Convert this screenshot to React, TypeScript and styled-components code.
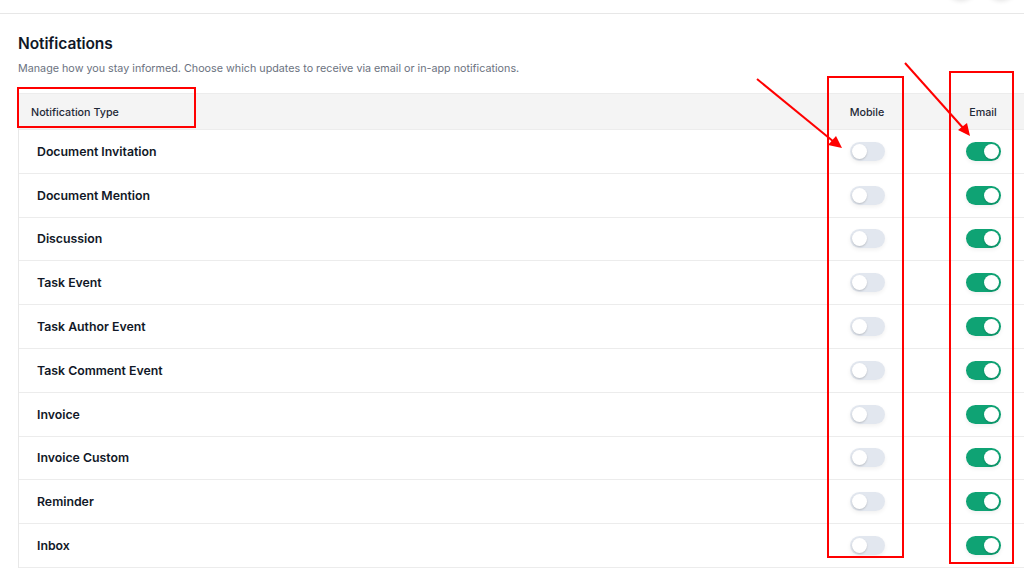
import React, { useState } from "react";
import styled, { createGlobalStyle } from "styled-components";

const Global = createGlobalStyle`
  html, body { margin: 0; padding: 0; background: #ffffff; overflow: hidden; }
  body { font-family: Inter, "Noto Sans", "Liberation Sans", sans-serif; color: #111827; }
  * { box-sizing: border-box; }
`;

const Page = styled.div`
  position: relative;
  width: 1024px;
  height: 569px;
  overflow: hidden;
`;

const TopBar = styled.div`
  height: 14px;
  border-bottom: 1px solid #e7e7e7;
  display: flex;
  justify-content: flex-end;
  align-items: flex-end;
  gap: 10px;
  padding-right: 8px;
  overflow: hidden;
`;

const CircleBtn = styled.div`
  width: 30px;
  height: 30px;
  border-radius: 50%;
  background: #fff;
  margin-bottom: 14px;
  box-shadow: 0 2px 5px rgba(0, 0, 0, 0.12);
`;

const Content = styled.div`
  padding: 20px 0 0 18px;
`;

const Title = styled.h2`
  margin: 0;
  font-size: 15.5px;
  font-weight: 600;
  line-height: 20px;
  color: #111827;
  letter-spacing: -0.1px;
`;

const Subtitle = styled.p`
  margin: 8px 0 0;
  font-size: 10.75px;
  line-height: 14px;
  color: #6b7280;
`;

const Table = styled.div`
  margin-top: 17px;
  width: 1023px;
  border-left: 1px solid #e8e8e8;
  border-top: 1px solid #ececec;
`;

const Row = styled.div<{ $head?: boolean }>`
  display: grid;
  grid-template-columns: 1fr 116px 116px;
  align-items: center;
  height: ${(p) => (p.$head ? "36px" : "43.8px")};
  background: ${(p) => (p.$head ? "#f4f4f4" : "#ffffff")};
  border-bottom: 1px solid #ececec;
`;

const HeadCell = styled.div<{ $center?: boolean }>`
  font-size: 10.75px;
  font-weight: 500;
  color: #1f2937;
  text-align: ${(p) => (p.$center ? "center" : "left")};
  padding-left: ${(p) => (p.$center ? "0" : "12px")};
  padding-top: 1px;
`;

const NameCell = styled.div`
  padding-left: 18px;
  font-size: 12.3px;
  font-weight: 600;
  color: #111827;
`;

const ToggleCell = styled.div`
  display: flex;
  justify-content: center;
`;

const Switch = styled.button<{ $on: boolean }>`
  position: relative;
  width: 35px;
  height: 19px;
  border-radius: 10px;
  border: none;
  padding: 0;
  cursor: pointer;
  background: ${(p) => (p.$on ? "#0fa374" : "#e2e7ef")};
  box-shadow: 0 2px 4px rgba(0, 0, 0, 0.06);
`;

const Knob = styled.span<{ $on: boolean }>`
  position: absolute;
  top: 2px;
  left: ${(p) => (p.$on ? "18px" : "2px")};
  width: 15px;
  height: 15px;
  border-radius: 50%;
  background: #ffffff;
  box-shadow: 0 1px 2px rgba(0, 0, 0, 0.18);
`;

const Overlay = styled.svg`
  position: absolute;
  left: 0;
  top: 0;
  width: 1024px;
  height: 569px;
  pointer-events: none;
`;

const rows = [
  "Document Invitation",
  "Document Mention",
  "Discussion",
  "Task Event",
  "Task Author Event",
  "Task Comment Event",
  "Invoice",
  "Invoice Custom",
  "Reminder",
  "Inbox",
];

function Toggle({ on, onClick }: { on: boolean; onClick: () => void }) {
  return (
    <Switch $on={on} onClick={onClick} aria-pressed={on}>
      <Knob $on={on} />
    </Switch>
  );
}

export default function App() {
  const [state, setState] = useState(
    rows.map(() => ({ mobile: false, email: true }))
  );
  const flip = (i: number, k: "mobile" | "email") =>
    setState((s) => s.map((r, j) => (j === i ? { ...r, [k]: !r[k] } : r)));

  return (
    <Page>
      <Global />
      <TopBar>
        <CircleBtn />
        <CircleBtn />
      </TopBar>
      <Content>
        <Title>Notifications</Title>
        <Subtitle>
          Manage how you stay informed. Choose which updates to receive via email or in-app notifications.
        </Subtitle>
        <Table>
          <Row $head>
            <HeadCell>Notification Type</HeadCell>
            <HeadCell $center>Mobile</HeadCell>
            <HeadCell $center>Email</HeadCell>
          </Row>
          {rows.map((name, i) => (
            <Row key={name}>
              <NameCell>{name}</NameCell>
              <ToggleCell>
                <Toggle on={state[i].mobile} onClick={() => flip(i, "mobile")} />
              </ToggleCell>
              <ToggleCell>
                <Toggle on={state[i].email} onClick={() => flip(i, "email")} />
              </ToggleCell>
            </Row>
          ))}
        </Table>
      </Content>
      <Overlay viewBox="0 0 1024 569">
        <g fill="none" stroke="#ff0000" strokeWidth="2">
          <rect x="18" y="88" width="177" height="39" />
          <rect x="828" y="77" width="75" height="480" />
          <rect x="950" y="72" width="63" height="491" />
          <line x1="757" y1="79" x2="834" y2="142" />
          <line x1="905" y1="63" x2="964" y2="129" />
        </g>
        <g fill="#ff0000">
          <polygon points="842,148 828,145 836,136" />
          <polygon points="970,136 958,130 967,123" />
        </g>
      </Overlay>
    </Page>
  );
}
